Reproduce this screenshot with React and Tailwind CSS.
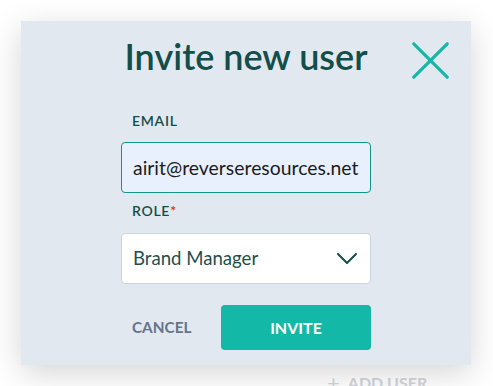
export default function App() {
  return (
    <div className="w-[493px] h-[386px] overflow-hidden bg-white" style={{ fontFamily: "Lato, sans-serif" }}>
      <div className="relative ml-[21px] mt-[21px] w-[450px] h-[344px] bg-[#e2e8f0] shadow-[0_8px_30px_rgba(0,0,0,0.17)] pt-[17px] flex flex-col items-center">
        <h1 className="text-[36px] leading-none font-semibold text-[#134e4a]">Invite new user</h1>
        <button className="absolute top-[21px] right-[22px] w-[37px] h-[37px]" aria-label="Close">
          <svg viewBox="0 0 37 37" className="w-[37px] h-[37px]" fill="none" stroke="#14b8a6" strokeWidth="3.2" strokeLinecap="round">
            <path d="M1.8 1.8 L35.2 35.2 M35.2 1.8 L1.8 35.2" />
          </svg>
        </button>
        <div className="w-[250px] mt-[40px] flex flex-col">
          <label className="pl-[11px] text-[14px] leading-none font-semibold tracking-[0.05em] text-[#134e4a]">EMAIL</label>
          <div className="mt-[14px] h-[51px] rounded-[4px] border border-[#139488] bg-[#e8f0fe] pl-[11px] flex items-center text-[19.4px] text-[#1c1c1c]">
            airit@reverseresources.net
          </div>
          <label className="mt-[11px] pl-[11px] text-[14px] leading-none font-semibold tracking-[0.05em] text-[#134e4a]">
            ROLE<span className="text-[#dc2626]">*</span>
          </label>
          <div className="mt-[15px] h-[51px] rounded-[4px] border border-[#cbd5e1] bg-white pl-[11px] pr-[13px] flex items-center justify-between text-[18.6px] text-[#1f4f4b]">
            <span>Brand Manager</span>
            <svg viewBox="0 0 20 11" className="w-[20px] h-[11px]" fill="none" stroke="#134e4a" strokeWidth="2" strokeLinecap="round" strokeLinejoin="round">
              <path d="M1 1 L10 10 L19 1" />
            </svg>
          </div>
          <div className="mt-[21px] flex items-center">
            <button className="w-[100px] h-[45px] pl-[11px] text-left text-[15.3px] font-bold text-[#64748b]">CANCEL</button>
            <button className="w-[150px] h-[45px] rounded-[4px] bg-[#14b8a6] text-white text-[16px] font-bold">INVITE</button>
          </div>
        </div>
      </div>
      <div className="mt-[7px] ml-[327px] flex items-center gap-[8px] text-[16px] leading-none font-bold text-[#d1d5db]">
        <span className="text-[22px] font-normal">+</span>
        <span>ADD USER</span>
      </div>
    </div>
  );
}
